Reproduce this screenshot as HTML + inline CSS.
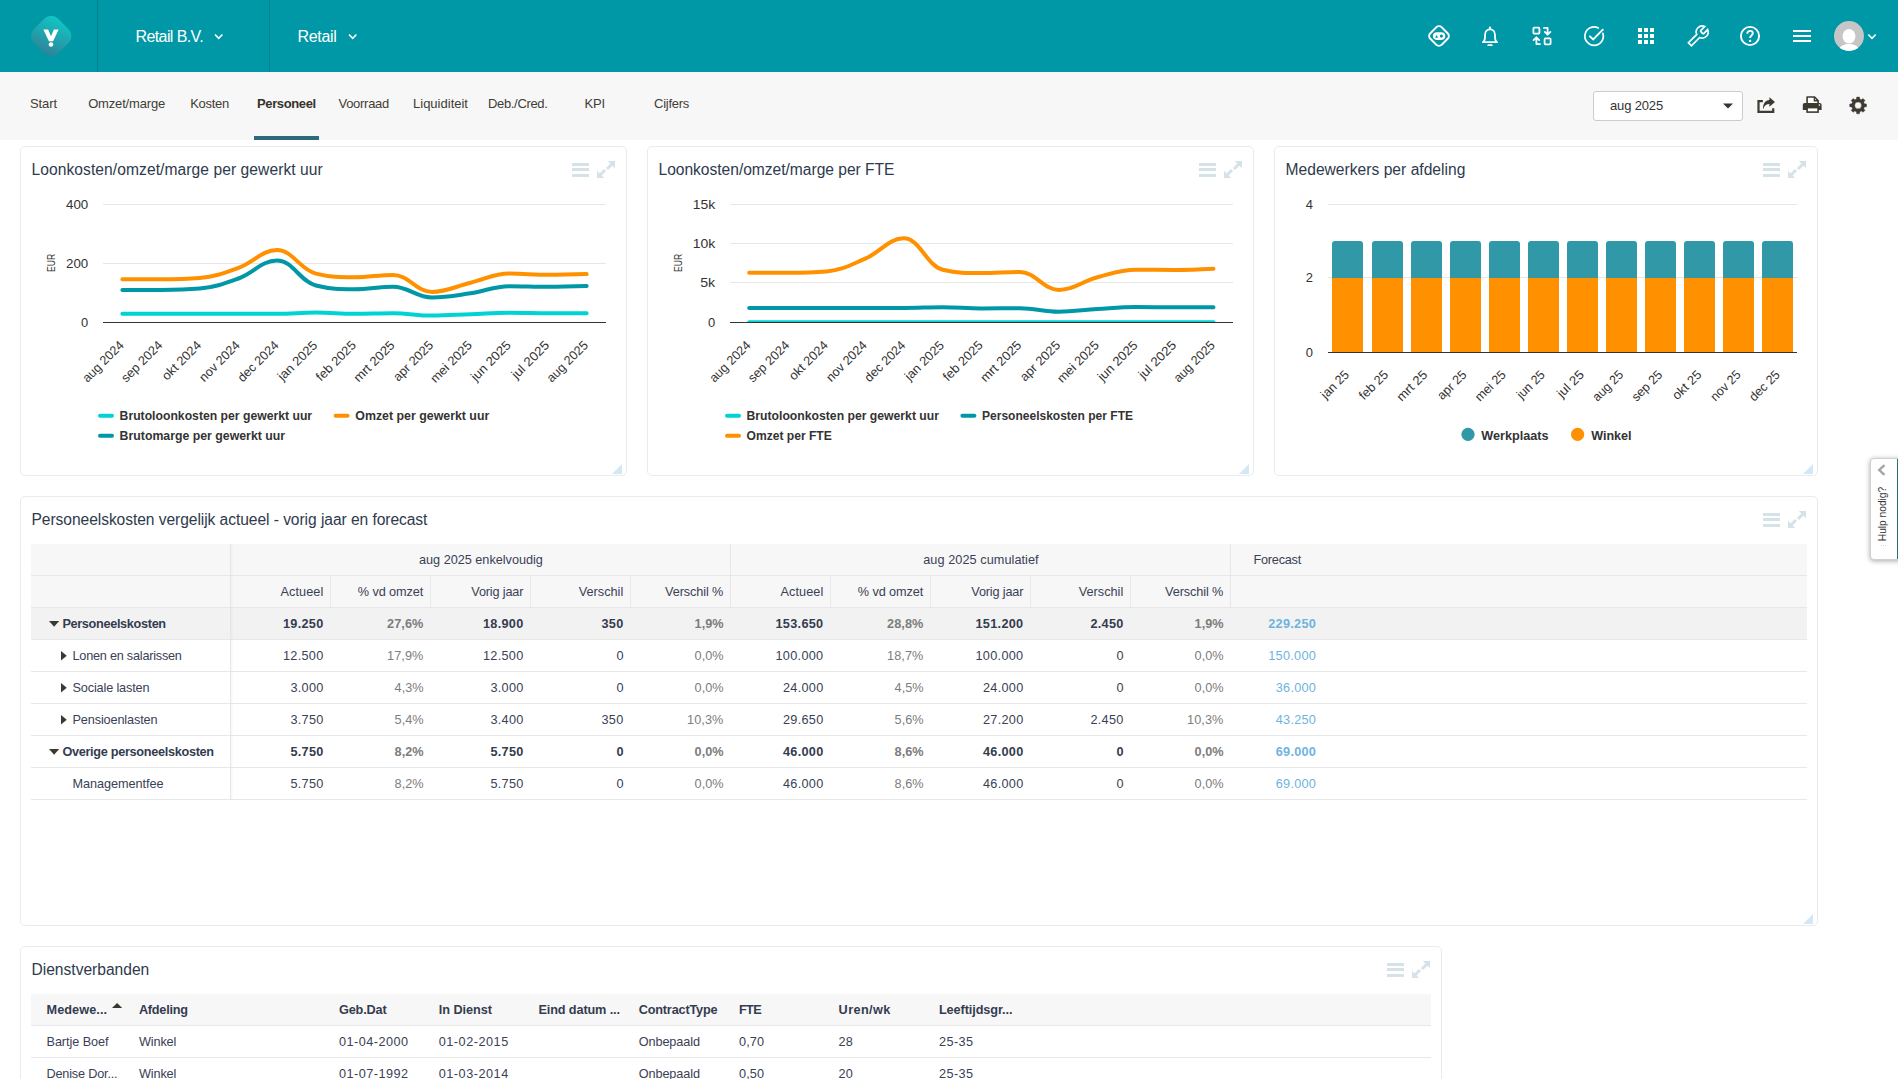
<!DOCTYPE html>
<html lang="nl"><head><meta charset="utf-8"><title>Personeel</title>
<style>

*{box-sizing:border-box;margin:0;padding:0}
html,body{width:1898px;height:1079px;overflow:hidden;background:#fff;font-family:"Liberation Sans",sans-serif;color:#333;font-size:13px}
.abs{position:absolute}
.t{position:absolute;white-space:nowrap;line-height:1}
#hdr{position:absolute;left:0;top:0;width:1898px;height:72px;background:#0097a7}
#sub{position:absolute;left:0;top:72px;width:1898px;height:68px;background:#f7f7f7}
.sep{position:absolute;top:0;width:1px;height:72px;background:#05808f}
.card{position:absolute;background:#fff;border:1px solid #ebebeb;border-radius:5px}
svg{position:absolute;overflow:visible}
svg text{font-family:"Liberation Sans",sans-serif}

</style></head>
<body>
<div id="hdr">
<div class="sep" style="left:97px"></div><div class="sep" style="left:269px"></div>
<svg style="left:29px;top:14px" width="44" height="44" viewBox="0 0 44 44">
<defs><linearGradient id="lg" x1="0.3" y1="0" x2="0.7" y2="1"><stop offset="0" stop-color="#12c4c4"/><stop offset="1" stop-color="#2d8599"/></linearGradient></defs>
<rect x="4.9" y="4.9" width="34.2" height="34.2" rx="9.5" fill="url(#lg)" transform="rotate(45 22 22.3)"/>
<path d="M14.4 15.6 L19.1 15.6 L22 22.2 L24.9 15.6 L29.6 15.6 L24.1 27.3 L19.9 27.3 Z" fill="#fff"/>
<circle cx="22" cy="30.5" r="2.3" fill="#fff"/>
</svg>
<div class="t" style="top:29.26px;font-size:16px;color:#fff;letter-spacing:-0.602px;left:135.50px;">Retail B.V.</div>
<div class="t" style="top:29.26px;font-size:16px;color:#fff;letter-spacing:-0.318px;left:297.50px;">Retail</div>
<svg style="left:0;top:0" width="1" height="1"><path d="M215.00 34.50 L218.70 38.30 L222.40 34.50" fill="none" stroke="#fff" stroke-width="1.6"/></svg>
<svg style="left:0;top:0" width="1" height="1"><path d="M349.00 34.50 L352.70 38.30 L356.40 34.50" fill="none" stroke="#fff" stroke-width="1.6"/></svg>
<svg style="left:0;top:0" width="1" height="1"><path d="M1868.30 34.50 L1872.00 38.30 L1875.70 34.50" fill="none" stroke="#fff" stroke-width="1.6"/></svg>
<svg style="left:1427.0px;top:24.0px" width="24" height="24" viewBox="0 0 24 24" fill="none" stroke="#fff" stroke-width="1.8" stroke-linecap="round" stroke-linejoin="round"><rect x="3.9" y="3.9" width="16.2" height="16.2" rx="4" transform="rotate(45 12 12)" stroke-width="2"/><rect x="5.9" y="8.3" width="12.4" height="7.6" rx="3.8" fill="#fff" stroke="none"/><path d="M8.1 13.7 L9.6 11 L11.1 13.7 Z" fill="#0097a7" stroke="none"/><circle cx="14.4" cy="12.1" r="1.6" fill="#0097a7" stroke="none"/></svg>
<svg style="left:1478.0px;top:24.0px" width="24" height="24" viewBox="0 0 24 24" fill="none" stroke="#fff" stroke-width="1.8" stroke-linecap="round" stroke-linejoin="round"><path d="M4.9 18.2 C6.7 17 7 15.4 7 13 L7 11.2 C7 7.7 9.2 5.3 12 5.3 C14.8 5.3 17 7.7 17 11.2 L17 13 C17 15.4 17.3 17 19.1 18.2 Z" stroke-width="1.8"/><path d="M12 5 L12 3.5" stroke-width="2.2"/><path d="M10.2 21.2 L13.8 21.2" stroke-width="1.7"/></svg>
<svg style="left:1530.0px;top:24.0px" width="24" height="24" viewBox="0 0 24 24" fill="none" stroke="#fff" stroke-width="1.8" stroke-linecap="round" stroke-linejoin="round"><rect x="3.4" y="3.6" width="6" height="6" rx="0.8"/><rect x="14.6" y="14.4" width="6" height="6" rx="0.8"/><path d="M14 3.9 L17.6 3.9 L17.6 10 M14.8 7.9 L17.6 10.7 L20.4 7.9"/><path d="M10 20.1 L6.4 20.1 L6.4 14 M3.6 16.1 L6.4 13.3 L9.2 16.1"/></svg>
<svg style="left:1582.0px;top:24.0px" width="24" height="24" viewBox="0 0 24 24" fill="none" stroke="#fff" stroke-width="1.8" stroke-linecap="round" stroke-linejoin="round"><path d="M20.9 9.4 A9.2 9.2 0 1 1 16.3 3.9" stroke-width="1.7"/><path d="M7.4 11.9 L11.2 15.4 L21.3 5.2" stroke-width="1.9" stroke-linecap="butt" stroke-linejoin="miter"/></svg>
<svg style="left:1634.0px;top:24.0px" width="24" height="24" viewBox="0 0 24 24" fill="none" stroke="#fff" stroke-width="1.8" stroke-linecap="round" stroke-linejoin="round"><rect x="4" y="4" width="4" height="4" fill="#fff" stroke="none"/><rect x="10" y="4" width="4" height="4" fill="#fff" stroke="none"/><rect x="16" y="4" width="4" height="4" fill="#fff" stroke="none"/><rect x="4" y="10" width="4" height="4" fill="#fff" stroke="none"/><rect x="10" y="10" width="4" height="4" fill="#fff" stroke="none"/><rect x="16" y="10" width="4" height="4" fill="#fff" stroke="none"/><rect x="4" y="16" width="4" height="4" fill="#fff" stroke="none"/><rect x="10" y="16" width="4" height="4" fill="#fff" stroke="none"/><rect x="16" y="16" width="4" height="4" fill="#fff" stroke="none"/></svg>
<svg style="left:1686.0px;top:24.0px" width="24" height="24" viewBox="0 0 24 24" fill="none" stroke="#fff" stroke-width="1.8" stroke-linecap="round" stroke-linejoin="round"><path d="M14.7 6.3a1 1 0 0 0 0 1.4l1.6 1.6a1 1 0 0 0 1.4 0l3.77-3.77a6 6 0 0 1-7.94 7.94l-8.3 8.3l-3-3l8.3-8.3a6 6 0 0 1 7.94-7.94l-3.76 3.76z" stroke-width="1.7" stroke-linejoin="miter" transform="translate(0.2 0)"/></svg>
<svg style="left:1738.0px;top:24.0px" width="24" height="24" viewBox="0 0 24 24" fill="none" stroke="#fff" stroke-width="1.8" stroke-linecap="round" stroke-linejoin="round"><circle cx="12" cy="12" r="9.1" stroke-width="1.9"/><path d="M9.3 9.7 C9.3 7.9 10.5 6.9 12.1 6.9 C13.7 6.9 14.8 7.9 14.8 9.3 C14.8 11.3 12.1 11.5 12.1 13.9" stroke-width="1.9" stroke-linecap="butt"/><circle cx="12.1" cy="16.9" r="1.2" fill="#fff" stroke="none"/></svg>
<div class="abs" style="left:1793px;top:30px;width:18px;height:2px;background:#fff"></div><div class="abs" style="left:1793px;top:35px;width:18px;height:2px;background:#fff"></div><div class="abs" style="left:1793px;top:40px;width:18px;height:2px;background:#fff"></div>
<svg style="left:1834px;top:21px" width="30" height="30" viewBox="0 0 30 30"><defs><clipPath id="av"><circle cx="15" cy="15" r="15"/></clipPath></defs>
<circle cx="15" cy="15" r="15" fill="#c6c6c6"/><g clip-path="url(#av)" fill="#fff"><ellipse cx="15" cy="15.3" rx="6.4" ry="7.3"/><path d="M4.5 31 C4.5 25.5 9 23 15 23 C21 23 25.5 25.5 25.5 31 Z"/></g></svg>
</div>
<div id="sub"></div>
<div class="t" style="top:97.40px;font-size:13px;color:#3f3d36;letter-spacing:-0.091px;left:30.00px;">Start</div>
<div class="t" style="top:97.40px;font-size:13px;color:#3f3d36;letter-spacing:-0.177px;left:88.20px;">Omzet/marge</div>
<div class="t" style="top:97.40px;font-size:13px;color:#3f3d36;letter-spacing:-0.279px;left:190.20px;">Kosten</div>
<div class="t" style="top:97.40px;font-size:13px;font-weight:bold;color:#35332b;letter-spacing:-0.372px;left:257.00px;">Personeel</div>
<div class="t" style="top:97.40px;font-size:13px;color:#3f3d36;letter-spacing:-0.283px;left:338.50px;">Voorraad</div>
<div class="t" style="top:97.40px;font-size:13px;color:#3f3d36;letter-spacing:0.006px;left:413.00px;">Liquiditeit</div>
<div class="t" style="top:97.40px;font-size:13px;color:#3f3d36;letter-spacing:-0.336px;left:488.00px;">Deb./Cred.</div>
<div class="t" style="top:97.40px;font-size:13px;color:#3f3d36;letter-spacing:-0.152px;left:584.50px;">KPI</div>
<div class="t" style="top:97.40px;font-size:13px;color:#3f3d36;letter-spacing:-0.263px;left:654.00px;">Cijfers</div>
<div class="abs" style="left:254px;top:136px;width:65px;height:4px;background:#2b6b7d"></div>
<div class="abs" style="left:1593px;top:91px;width:150px;height:30px;background:#fff;border:1px solid #ccc;border-radius:3px"></div>
<div class="t" style="top:99.00px;font-size:13px;color:#333;letter-spacing:-0.153px;left:1610.00px;">aug 2025</div>
<svg style="left:0;top:0" width="1" height="1"><path d="M1723 103.5 L1733 103.5 L1728 108.5 Z" fill="#333"/></svg>
<svg style="left:0;top:0" width="1" height="1">
<path d="M1762.9 101.2 L1758.5 101.2 L1758.5 111.8 L1773.2 111.8 L1773.2 108.2" fill="none" stroke="#3d3a30" stroke-width="2.2"/>
<path d="M1769.4 97.2 L1775 101.9 L1769.4 106.7 L1769.4 104 C1766.3 104 1764.3 105.8 1763 109.4 C1762.8 103.6 1765.4 99.9 1769.4 99.9 Z" fill="#3d3a30"/>
</svg>
<svg style="left:0;top:0" width="1" height="1">
<path d="M1807.1 104 L1807.1 97 L1814.6 97 L1818.1 100.5 L1818.1 104 Z" fill="#fff" stroke="#3d3a30" stroke-width="1.6" stroke-linejoin="round"/>
<path d="M1814.4 97.2 L1814.4 100.7 L1818 100.7" fill="none" stroke="#3d3a30" stroke-width="1.4"/>
<path d="M1802.8 110 L1802.8 104.8 Q1802.8 102.9 1804.7 102.9 L1819.7 102.9 Q1821.6 102.9 1821.6 104.8 L1821.6 110 Z" fill="#3d3a30"/>
<rect x="1807.1" y="107.6" width="11" height="4.5" fill="#fff" stroke="#3d3a30" stroke-width="1.6"/>
<circle cx="1819.4" cy="105.1" r="0.8" fill="#fff"/>
</svg>
<svg style="left:0;top:0" width="1" height="1"><path d="M1864.39 103.77 L1866.48 104.00 L1866.48 106.80 L1864.39 107.03 L1863.70 108.70 L1865.02 110.34 L1863.04 112.32 L1861.40 111.00 L1859.73 111.69 L1859.50 113.78 L1856.70 113.78 L1856.47 111.69 L1854.80 111.00 L1853.16 112.32 L1851.18 110.34 L1852.50 108.70 L1851.81 107.03 L1849.72 106.80 L1849.72 104.00 L1851.81 103.77 L1852.50 102.10 L1851.18 100.46 L1853.16 98.48 L1854.80 99.80 L1856.47 99.11 L1856.70 97.02 L1859.50 97.02 L1859.73 99.11 L1861.40 99.80 L1863.04 98.48 L1865.02 100.46 L1863.70 102.10 Z M1861.50 105.40 A3.4 3.4 0 1 0 1854.70 105.40 A3.4 3.4 0 1 0 1861.50 105.40 Z" fill="#3d3a30" fill-rule="evenodd" stroke="#3d3a30" stroke-width="0.4" stroke-linejoin="round"/></svg>
<div class="card" style="left:20px;top:146px;width:607px;height:330px"><div class="abs" style="left:-21px;top:-147px;width:0;height:0"><div class="t" style="top:161.99px;font-size:15.6px;color:#2e3a4d;letter-spacing:0.072px;left:31.50px;">Loonkosten/omzet/marge per gewerkt uur</div><div class="abs" style="left:571.5px;top:163px;width:17.5px;height:3px;background:#d5e2e7"></div><div class="abs" style="left:571.5px;top:168px;width:17.5px;height:3px;background:#d5e2e7"></div><div class="abs" style="left:571.5px;top:174px;width:17.5px;height:3px;background:#d5e2e7"></div><svg style="left:597px;top:161px" width="18" height="17" viewBox="0 0 18 17"><g fill="#d5e2e7" stroke="#d5e2e7" stroke-width="0"><path d="M10.8 0 L18 0 L18 7.2 Z"/><path d="M0 17 L0 9.8 L7.2 17 Z"/><path d="M15 3 L10 8 M3 14 L8 9" stroke-width="2.9" fill="none"/></g></svg><svg style="left:612px;top:464px" width="10" height="10"><path d="M10 0 L10 10 L0 10 Z" fill="#d3e7f5"/></svg>
<svg style="left:0;top:0" width="1898" height="1079" viewBox="0 0 1898 1079"><path d="M103 204.5 L606 204.5" stroke="#e6e6e6" stroke-width="1"/><path d="M103 263.5 L606 263.5" stroke="#e6e6e6" stroke-width="1"/><path d="M122.35 313.80 C122.35 313.80 145.56 313.80 161.04 313.80 C176.52 313.80 184.25 313.80 199.73 313.80 C215.21 313.80 222.94 313.80 238.42 313.80 C253.90 313.80 261.63 313.80 277.11 313.80 C292.59 313.80 300.32 312.60 315.80 312.60 C331.28 312.60 339.01 313.70 354.49 313.70 C369.97 313.70 377.70 313.20 393.18 313.20 C408.66 313.20 416.39 315.60 431.87 315.60 C447.35 315.60 455.08 314.78 470.56 314.20 C486.04 313.62 493.77 312.70 509.25 312.70 C524.73 312.70 532.46 313.10 547.94 313.20 C563.42 313.30 586.63 313.30 586.63 313.30" stroke="#00d3d3" stroke-width="4" stroke-linecap="round" stroke-linejoin="round" fill="none"/><path d="M122.35 279.30 C122.35 279.30 145.56 279.30 161.04 279.30 C176.52 279.30 184.25 279.30 199.73 277.90 C215.21 276.50 222.94 273.46 238.42 267.90 C253.90 262.34 261.63 250.10 277.11 250.10 C292.59 250.10 300.32 269.90 315.80 273.60 C331.28 277.30 339.01 277.30 354.49 277.30 C369.97 277.30 377.70 274.90 393.18 274.90 C408.66 274.90 416.39 291.90 431.87 291.90 C447.35 291.90 455.08 286.36 470.56 282.70 C486.04 279.04 493.77 273.60 509.25 273.60 C524.73 273.60 532.46 274.80 547.94 274.80 C563.42 274.80 586.63 274.10 586.63 274.10" stroke="#ff9100" stroke-width="4" stroke-linecap="round" stroke-linejoin="round" fill="none"/><path d="M122.35 289.90 C122.35 289.90 145.56 289.90 161.04 289.90 C176.52 289.90 184.25 289.90 199.73 288.50 C215.21 287.10 222.94 284.12 238.42 278.50 C253.90 272.88 261.63 260.40 277.11 260.40 C292.59 260.40 300.32 281.80 315.80 285.50 C331.28 289.20 339.01 289.20 354.49 289.20 C369.97 289.20 377.70 286.80 393.18 286.80 C408.66 286.80 416.39 297.50 431.87 297.50 C447.35 297.50 455.08 295.56 470.56 293.30 C486.04 291.04 493.77 286.20 509.25 286.20 C524.73 286.20 532.46 286.80 547.94 286.80 C563.42 286.80 586.63 286.00 586.63 286.00" stroke="#0097a7" stroke-width="4" stroke-linecap="round" stroke-linejoin="round" fill="none"/><path d="M103 322.5 L606 322.5" stroke="#333" stroke-width="1"/><text x="88.2" y="209.1" text-anchor="end" font-size="12.7" fill="#333" textLength="22.2" lengthAdjust="spacingAndGlyphs">400</text><text x="88.2" y="268.1" text-anchor="end" font-size="12.7" fill="#333" textLength="22.2" lengthAdjust="spacingAndGlyphs">200</text><text x="88.2" y="327.1" text-anchor="end" font-size="12.7" fill="#333" textLength="7.2" lengthAdjust="spacingAndGlyphs">0</text><text transform="translate(55.1 262.9) rotate(-90)" text-anchor="middle" font-size="10" fill="#333" textLength="18.2" lengthAdjust="spacingAndGlyphs">EUR</text><text transform="translate(124.6 346) rotate(-45)" text-anchor="end" font-size="12.7" fill="#333" textLength="52.5" lengthAdjust="spacingAndGlyphs">aug 2024</text><text transform="translate(163.3 346) rotate(-45)" text-anchor="end" font-size="12.7" fill="#333" textLength="52.5" lengthAdjust="spacingAndGlyphs">sep 2024</text><text transform="translate(202.0 346) rotate(-45)" text-anchor="end" font-size="12.7" fill="#333" textLength="49.5" lengthAdjust="spacingAndGlyphs">okt 2024</text><text transform="translate(240.7 346) rotate(-45)" text-anchor="end" font-size="12.7" fill="#333" textLength="51.5" lengthAdjust="spacingAndGlyphs">nov 2024</text><text transform="translate(279.4 346) rotate(-45)" text-anchor="end" font-size="12.7" fill="#333" textLength="52" lengthAdjust="spacingAndGlyphs">dec 2024</text><text transform="translate(318.1 346) rotate(-45)" text-anchor="end" font-size="12.7" fill="#333" textLength="50" lengthAdjust="spacingAndGlyphs">jan 2025</text><text transform="translate(356.8 346) rotate(-45)" text-anchor="end" font-size="12.7" fill="#333" textLength="50.5" lengthAdjust="spacingAndGlyphs">feb 2025</text><text transform="translate(395.5 346) rotate(-45)" text-anchor="end" font-size="12.7" fill="#333" textLength="52" lengthAdjust="spacingAndGlyphs">mrt 2025</text><text transform="translate(434.2 346) rotate(-45)" text-anchor="end" font-size="12.7" fill="#333" textLength="51" lengthAdjust="spacingAndGlyphs">apr 2025</text><text transform="translate(472.9 346) rotate(-45)" text-anchor="end" font-size="12.7" fill="#333" textLength="53" lengthAdjust="spacingAndGlyphs">mei 2025</text><text transform="translate(511.6 346) rotate(-45)" text-anchor="end" font-size="12.7" fill="#333" textLength="50.5" lengthAdjust="spacingAndGlyphs">jun 2025</text><text transform="translate(550.2 346) rotate(-45)" text-anchor="end" font-size="12.7" fill="#333" textLength="47.5" lengthAdjust="spacingAndGlyphs">jul 2025</text><text transform="translate(588.9 346) rotate(-45)" text-anchor="end" font-size="12.7" fill="#333" textLength="52.5" lengthAdjust="spacingAndGlyphs">aug 2025</text><path d="M100 415.8 L112 415.8" stroke="#00d3d3" stroke-width="4" stroke-linecap="round" fill="none"/><text x="119.6" y="420.4" font-size="12.7" font-weight="bold" fill="#333" textLength="192.5" lengthAdjust="spacingAndGlyphs">Brutoloonkosten per gewerkt uur</text><path d="M335.6 415.8 L347.6 415.8" stroke="#ff9100" stroke-width="4" stroke-linecap="round" fill="none"/><text x="355.3" y="420.4" font-size="12.7" font-weight="bold" fill="#333" textLength="134" lengthAdjust="spacingAndGlyphs">Omzet per gewerkt uur</text><path d="M100 435.8 L112 435.8" stroke="#0097a7" stroke-width="4" stroke-linecap="round" fill="none"/><text x="119.6" y="440.4" font-size="12.7" font-weight="bold" fill="#333" textLength="165.5" lengthAdjust="spacingAndGlyphs">Brutomarge per gewerkt uur</text></svg>
</div></div>
<div class="card" style="left:647px;top:146px;width:607px;height:330px"><div class="abs" style="left:-648px;top:-147px;width:0;height:0"><div class="t" style="top:161.99px;font-size:15.6px;color:#2e3a4d;letter-spacing:-0.024px;left:658.50px;">Loonkosten/omzet/marge per FTE</div><div class="abs" style="left:1198.5px;top:163px;width:17.5px;height:3px;background:#d5e2e7"></div><div class="abs" style="left:1198.5px;top:168px;width:17.5px;height:3px;background:#d5e2e7"></div><div class="abs" style="left:1198.5px;top:174px;width:17.5px;height:3px;background:#d5e2e7"></div><svg style="left:1224px;top:161px" width="18" height="17" viewBox="0 0 18 17"><g fill="#d5e2e7" stroke="#d5e2e7" stroke-width="0"><path d="M10.8 0 L18 0 L18 7.2 Z"/><path d="M0 17 L0 9.8 L7.2 17 Z"/><path d="M15 3 L10 8 M3 14 L8 9" stroke-width="2.9" fill="none"/></g></svg><svg style="left:1239px;top:464px" width="10" height="10"><path d="M10 0 L10 10 L0 10 Z" fill="#d3e7f5"/></svg>
<svg style="left:0;top:0" width="1898" height="1079" viewBox="0 0 1898 1079"><path d="M730 204.5 L1233 204.5" stroke="#e6e6e6" stroke-width="1"/><path d="M730 243.5 L1233 243.5" stroke="#e6e6e6" stroke-width="1"/><path d="M730 282.5 L1233 282.5" stroke="#e6e6e6" stroke-width="1"/><clipPath id="c2"><rect x="730" y="200" width="503" height="122.5"/></clipPath><path clip-path="url(#c2)" d="M749.20 322.20 C749.20 322.20 772.41 322.20 787.89 322.20 C803.37 322.20 811.10 322.20 826.58 322.20 C842.06 322.20 849.79 322.20 865.27 322.20 C880.75 322.20 888.48 322.20 903.96 322.20 C919.44 322.20 927.17 322.20 942.65 322.20 C958.13 322.20 965.86 322.20 981.34 322.20 C996.82 322.20 1004.55 322.20 1020.03 322.20 C1035.51 322.20 1043.24 322.20 1058.72 322.20 C1074.20 322.20 1081.93 322.20 1097.41 322.20 C1112.89 322.20 1120.62 322.20 1136.10 322.20 C1151.58 322.20 1159.31 322.20 1174.79 322.20 C1190.27 322.20 1213.48 322.20 1213.48 322.20" stroke="#00d3d3" stroke-width="4" stroke-linecap="round" fill="none"/><path d="M749.20 307.90 C749.20 307.90 772.41 307.90 787.89 307.90 C803.37 307.90 811.10 307.90 826.58 307.90 C842.06 307.90 849.79 307.90 865.27 307.90 C880.75 307.90 888.48 307.90 903.96 307.90 C919.44 307.90 927.17 307.30 942.65 307.30 C958.13 307.30 965.86 308.40 981.34 308.40 C996.82 308.40 1004.55 308.20 1020.03 308.20 C1035.51 308.20 1043.24 311.70 1058.72 311.70 C1074.20 311.70 1081.93 309.92 1097.41 309.00 C1112.89 308.08 1120.62 307.10 1136.10 307.10 C1151.58 307.10 1159.31 307.30 1174.79 307.30 C1190.27 307.30 1213.48 307.20 1213.48 307.20" stroke="#0097a7" stroke-width="4" stroke-linecap="round" stroke-linejoin="round" fill="none"/><path d="M749.20 272.70 C749.20 272.70 772.41 272.70 787.89 272.70 C803.37 272.70 811.10 272.70 826.58 271.40 C842.06 270.10 849.79 265.32 865.27 258.70 C880.75 252.08 888.48 238.30 903.96 238.30 C919.44 238.30 927.17 266.30 942.65 269.70 C958.13 273.10 965.86 273.10 981.34 273.10 C996.82 273.10 1004.55 272.00 1020.03 272.00 C1035.51 272.00 1043.24 289.90 1058.72 289.90 C1074.20 289.90 1081.93 281.24 1097.41 277.20 C1112.89 273.16 1120.62 269.70 1136.10 269.70 C1151.58 269.70 1159.31 269.90 1174.79 269.90 C1190.27 269.90 1213.48 268.70 1213.48 268.70" stroke="#ff9100" stroke-width="4" stroke-linecap="round" stroke-linejoin="round" fill="none"/><path d="M730 322.5 L1233 322.5" stroke="#333" stroke-width="1"/><text x="715.2" y="209.1" text-anchor="end" font-size="12.7" fill="#333" textLength="22.5" lengthAdjust="spacingAndGlyphs">15k</text><text x="715.2" y="248.1" text-anchor="end" font-size="12.7" fill="#333" textLength="22.5" lengthAdjust="spacingAndGlyphs">10k</text><text x="715.2" y="287.1" text-anchor="end" font-size="12.7" fill="#333" textLength="15" lengthAdjust="spacingAndGlyphs">5k</text><text x="715.2" y="327.1" text-anchor="end" font-size="12.7" fill="#333" textLength="7.2" lengthAdjust="spacingAndGlyphs">0</text><text transform="translate(682.1 262.9) rotate(-90)" text-anchor="middle" font-size="10" fill="#333" textLength="18.2" lengthAdjust="spacingAndGlyphs">EUR</text><text transform="translate(751.5 346) rotate(-45)" text-anchor="end" font-size="12.7" fill="#333" textLength="52.5" lengthAdjust="spacingAndGlyphs">aug 2024</text><text transform="translate(790.2 346) rotate(-45)" text-anchor="end" font-size="12.7" fill="#333" textLength="52.5" lengthAdjust="spacingAndGlyphs">sep 2024</text><text transform="translate(828.9 346) rotate(-45)" text-anchor="end" font-size="12.7" fill="#333" textLength="49.5" lengthAdjust="spacingAndGlyphs">okt 2024</text><text transform="translate(867.6 346) rotate(-45)" text-anchor="end" font-size="12.7" fill="#333" textLength="51.5" lengthAdjust="spacingAndGlyphs">nov 2024</text><text transform="translate(906.3 346) rotate(-45)" text-anchor="end" font-size="12.7" fill="#333" textLength="52" lengthAdjust="spacingAndGlyphs">dec 2024</text><text transform="translate(945.0 346) rotate(-45)" text-anchor="end" font-size="12.7" fill="#333" textLength="50" lengthAdjust="spacingAndGlyphs">jan 2025</text><text transform="translate(983.6 346) rotate(-45)" text-anchor="end" font-size="12.7" fill="#333" textLength="50.5" lengthAdjust="spacingAndGlyphs">feb 2025</text><text transform="translate(1022.3 346) rotate(-45)" text-anchor="end" font-size="12.7" fill="#333" textLength="52" lengthAdjust="spacingAndGlyphs">mrt 2025</text><text transform="translate(1061.0 346) rotate(-45)" text-anchor="end" font-size="12.7" fill="#333" textLength="51" lengthAdjust="spacingAndGlyphs">apr 2025</text><text transform="translate(1099.7 346) rotate(-45)" text-anchor="end" font-size="12.7" fill="#333" textLength="53" lengthAdjust="spacingAndGlyphs">mei 2025</text><text transform="translate(1138.4 346) rotate(-45)" text-anchor="end" font-size="12.7" fill="#333" textLength="50.5" lengthAdjust="spacingAndGlyphs">jun 2025</text><text transform="translate(1177.1 346) rotate(-45)" text-anchor="end" font-size="12.7" fill="#333" textLength="47.5" lengthAdjust="spacingAndGlyphs">jul 2025</text><text transform="translate(1215.8 346) rotate(-45)" text-anchor="end" font-size="12.7" fill="#333" textLength="52.5" lengthAdjust="spacingAndGlyphs">aug 2025</text><path d="M727 415.8 L739 415.8" stroke="#00d3d3" stroke-width="4" stroke-linecap="round" fill="none"/><text x="746.5" y="420.4" font-size="12.7" font-weight="bold" fill="#333" textLength="192.5" lengthAdjust="spacingAndGlyphs">Brutoloonkosten per gewerkt uur</text><path d="M962.4 415.8 L974.4 415.8" stroke="#0097a7" stroke-width="4" stroke-linecap="round" fill="none"/><text x="982" y="420.4" font-size="12.7" font-weight="bold" fill="#333" textLength="151" lengthAdjust="spacingAndGlyphs">Personeelskosten per FTE</text><path d="M727 435.8 L739 435.8" stroke="#ff9100" stroke-width="4" stroke-linecap="round" fill="none"/><text x="746.5" y="440.4" font-size="12.7" font-weight="bold" fill="#333" textLength="85.3" lengthAdjust="spacingAndGlyphs">Omzet per FTE</text></svg>
</div></div>
<div class="card" style="left:1274px;top:146px;width:544px;height:330px"><div class="abs" style="left:-1275px;top:-147px;width:0;height:0"><div class="t" style="top:161.99px;font-size:15.6px;color:#2e3a4d;letter-spacing:0.021px;left:1285.50px;">Medewerkers per afdeling</div><div class="abs" style="left:1762.5px;top:163px;width:17.5px;height:3px;background:#d5e2e7"></div><div class="abs" style="left:1762.5px;top:168px;width:17.5px;height:3px;background:#d5e2e7"></div><div class="abs" style="left:1762.5px;top:174px;width:17.5px;height:3px;background:#d5e2e7"></div><svg style="left:1788px;top:161px" width="18" height="17" viewBox="0 0 18 17"><g fill="#d5e2e7" stroke="#d5e2e7" stroke-width="0"><path d="M10.8 0 L18 0 L18 7.2 Z"/><path d="M0 17 L0 9.8 L7.2 17 Z"/><path d="M15 3 L10 8 M3 14 L8 9" stroke-width="2.9" fill="none"/></g></svg><svg style="left:1803px;top:464px" width="10" height="10"><path d="M10 0 L10 10 L0 10 Z" fill="#d3e7f5"/></svg>
<svg style="left:0;top:0" width="1898" height="1079" viewBox="0 0 1898 1079"><path d="M1328 204.5 L1797 204.5" stroke="#e6e6e6" stroke-width="1"/><path d="M1328 277.5 L1797 277.5" stroke="#e6e6e6" stroke-width="1"/><path d="M1332 278 L1332 244 Q1332 241 1335 241 L1360 241 Q1363 241 1363 244 L1363 278 Z" fill="#3098a6"/><rect x="1332" y="278" width="31" height="74" fill="#ff9100"/><path d="M1372 278 L1372 244 Q1372 241 1375 241 L1400 241 Q1403 241 1403 244 L1403 278 Z" fill="#3098a6"/><rect x="1372" y="278" width="31" height="74" fill="#ff9100"/><path d="M1411 278 L1411 244 Q1411 241 1414 241 L1439 241 Q1442 241 1442 244 L1442 278 Z" fill="#3098a6"/><rect x="1411" y="278" width="31" height="74" fill="#ff9100"/><path d="M1450 278 L1450 244 Q1450 241 1453 241 L1478 241 Q1481 241 1481 244 L1481 278 Z" fill="#3098a6"/><rect x="1450" y="278" width="31" height="74" fill="#ff9100"/><path d="M1489 278 L1489 244 Q1489 241 1492 241 L1517 241 Q1520 241 1520 244 L1520 278 Z" fill="#3098a6"/><rect x="1489" y="278" width="31" height="74" fill="#ff9100"/><path d="M1528 278 L1528 244 Q1528 241 1531 241 L1556 241 Q1559 241 1559 244 L1559 278 Z" fill="#3098a6"/><rect x="1528" y="278" width="31" height="74" fill="#ff9100"/><path d="M1567 278 L1567 244 Q1567 241 1570 241 L1595 241 Q1598 241 1598 244 L1598 278 Z" fill="#3098a6"/><rect x="1567" y="278" width="31" height="74" fill="#ff9100"/><path d="M1606 278 L1606 244 Q1606 241 1609 241 L1634 241 Q1637 241 1637 244 L1637 278 Z" fill="#3098a6"/><rect x="1606" y="278" width="31" height="74" fill="#ff9100"/><path d="M1645 278 L1645 244 Q1645 241 1648 241 L1673 241 Q1676 241 1676 244 L1676 278 Z" fill="#3098a6"/><rect x="1645" y="278" width="31" height="74" fill="#ff9100"/><path d="M1684 278 L1684 244 Q1684 241 1687 241 L1712 241 Q1715 241 1715 244 L1715 278 Z" fill="#3098a6"/><rect x="1684" y="278" width="31" height="74" fill="#ff9100"/><path d="M1723 278 L1723 244 Q1723 241 1726 241 L1751 241 Q1754 241 1754 244 L1754 278 Z" fill="#3098a6"/><rect x="1723" y="278" width="31" height="74" fill="#ff9100"/><path d="M1762 278 L1762 244 Q1762 241 1765 241 L1790 241 Q1793 241 1793 244 L1793 278 Z" fill="#3098a6"/><rect x="1762" y="278" width="31" height="74" fill="#ff9100"/><path d="M1328 352.5 L1797 352.5" stroke="#333" stroke-width="1"/><text x="1313" y="209.1" text-anchor="end" font-size="12.7" fill="#333" textLength="7.2" lengthAdjust="spacingAndGlyphs">4</text><text x="1313" y="282.1" text-anchor="end" font-size="12.7" fill="#333" textLength="7.2" lengthAdjust="spacingAndGlyphs">2</text><text x="1313" y="356.6" text-anchor="end" font-size="12.7" fill="#333" textLength="7.2" lengthAdjust="spacingAndGlyphs">0</text><text transform="translate(1349.9 375.5) rotate(-45)" text-anchor="end" font-size="12.7" fill="#333" textLength="34" lengthAdjust="spacingAndGlyphs">jan 25</text><text transform="translate(1389.1 375.5) rotate(-45)" text-anchor="end" font-size="12.7" fill="#333" textLength="35.5" lengthAdjust="spacingAndGlyphs">feb 25</text><text transform="translate(1428.2 375.5) rotate(-45)" text-anchor="end" font-size="12.7" fill="#333" textLength="37.5" lengthAdjust="spacingAndGlyphs">mrt 25</text><text transform="translate(1467.4 375.5) rotate(-45)" text-anchor="end" font-size="12.7" fill="#333" textLength="35.5" lengthAdjust="spacingAndGlyphs">apr 25</text><text transform="translate(1506.6 375.5) rotate(-45)" text-anchor="end" font-size="12.7" fill="#333" textLength="37.5" lengthAdjust="spacingAndGlyphs">mei 25</text><text transform="translate(1545.7 375.5) rotate(-45)" text-anchor="end" font-size="12.7" fill="#333" textLength="34" lengthAdjust="spacingAndGlyphs">jun 25</text><text transform="translate(1584.9 375.5) rotate(-45)" text-anchor="end" font-size="12.7" fill="#333" textLength="32.5" lengthAdjust="spacingAndGlyphs">jul 25</text><text transform="translate(1624.1 375.5) rotate(-45)" text-anchor="end" font-size="12.7" fill="#333" textLength="37.5" lengthAdjust="spacingAndGlyphs">aug 25</text><text transform="translate(1663.2 375.5) rotate(-45)" text-anchor="end" font-size="12.7" fill="#333" textLength="37.5" lengthAdjust="spacingAndGlyphs">sep 25</text><text transform="translate(1702.4 375.5) rotate(-45)" text-anchor="end" font-size="12.7" fill="#333" textLength="35.5" lengthAdjust="spacingAndGlyphs">okt 25</text><text transform="translate(1741.6 375.5) rotate(-45)" text-anchor="end" font-size="12.7" fill="#333" textLength="37" lengthAdjust="spacingAndGlyphs">nov 25</text><text transform="translate(1780.7 375.5) rotate(-45)" text-anchor="end" font-size="12.7" fill="#333" textLength="37.5" lengthAdjust="spacingAndGlyphs">dec 25</text><circle cx="1468" cy="434.4" r="6.6" fill="#3098a6"/><text x="1481.3" y="440.2" font-size="12.7" font-weight="bold" fill="#333" textLength="67.3" lengthAdjust="spacingAndGlyphs">Werkplaats</text><circle cx="1577.6" cy="434.4" r="6.6" fill="#ff9100"/><text x="1591.2" y="440.2" font-size="12.7" font-weight="bold" fill="#333" textLength="40.4" lengthAdjust="spacingAndGlyphs">Winkel</text></svg>
</div></div>
<div class="card" style="left:20px;top:496px;width:1798px;height:430px"><div class="abs" style="left:-21px;top:-497px;width:0;height:0"><div class="t" style="top:511.99px;font-size:15.6px;color:#2e3a4d;letter-spacing:-0.063px;left:31.50px;">Personeelskosten vergelijk actueel - vorig jaar en forecast</div><div class="abs" style="left:1762.5px;top:513px;width:17.5px;height:3px;background:#d5e2e7"></div><div class="abs" style="left:1762.5px;top:518px;width:17.5px;height:3px;background:#d5e2e7"></div><div class="abs" style="left:1762.5px;top:524px;width:17.5px;height:3px;background:#d5e2e7"></div><svg style="left:1788px;top:511px" width="18" height="17" viewBox="0 0 18 17"><g fill="#d5e2e7" stroke="#d5e2e7" stroke-width="0"><path d="M10.8 0 L18 0 L18 7.2 Z"/><path d="M0 17 L0 9.8 L7.2 17 Z"/><path d="M15 3 L10 8 M3 14 L8 9" stroke-width="2.9" fill="none"/></g></svg><svg style="left:1803px;top:914px" width="10" height="10"><path d="M10 0 L10 10 L0 10 Z" fill="#d3e7f5"/></svg>
<div class="abs" style="left:31px;top:544px;width:1776px;height:64px;background:#f7f7f7"></div><div class="abs" style="left:31px;top:608px;width:1776px;height:32px;background:#f2f2f2"></div><div class="abs" style="left:31px;top:575px;width:1776px;height:1px;background:#e8e8e8"></div><div class="abs" style="left:31px;top:607px;width:1776px;height:1px;background:#e8e8e8"></div><div class="abs" style="left:31px;top:639px;width:1776px;height:1px;background:#e8e8e8"></div><div class="abs" style="left:31px;top:671px;width:1776px;height:1px;background:#e8e8e8"></div><div class="abs" style="left:31px;top:703px;width:1776px;height:1px;background:#e8e8e8"></div><div class="abs" style="left:31px;top:735px;width:1776px;height:1px;background:#e8e8e8"></div><div class="abs" style="left:31px;top:767px;width:1776px;height:1px;background:#e8e8e8"></div><div class="abs" style="left:31px;top:799px;width:1776px;height:1px;background:#e8e8e8"></div><div class="abs" style="left:730px;top:544px;width:1px;height:63px;background:#e6e6e6"></div><div class="abs" style="left:1230px;top:544px;width:1px;height:63px;background:#e6e6e6"></div><div class="abs" style="left:330px;top:576px;width:1px;height:31px;background:#e9e9e9"></div><div class="abs" style="left:430px;top:576px;width:1px;height:31px;background:#e9e9e9"></div><div class="abs" style="left:530px;top:576px;width:1px;height:31px;background:#e9e9e9"></div><div class="abs" style="left:630px;top:576px;width:1px;height:31px;background:#e9e9e9"></div><div class="abs" style="left:830px;top:576px;width:1px;height:31px;background:#e9e9e9"></div><div class="abs" style="left:930px;top:576px;width:1px;height:31px;background:#e9e9e9"></div><div class="abs" style="left:1030px;top:576px;width:1px;height:31px;background:#e9e9e9"></div><div class="abs" style="left:1130px;top:576px;width:1px;height:31px;background:#e9e9e9"></div><div class="abs" style="left:230px;top:544px;width:4px;height:256px;background:linear-gradient(90deg,#e6e6e6 0,#e6e6e6 25%,rgba(0,0,0,0.03) 25%,rgba(0,0,0,0) 100%)"></div><div class="t" style="top:553.55px;font-size:12.7px;color:#3a4156;letter-spacing:-0.014px;left:419.00px;">aug 2025 enkelvoudig</div><div class="t" style="top:553.55px;font-size:12.7px;color:#3a4156;letter-spacing:0.060px;left:923.25px;">aug 2025 cumulatief</div><div class="t" style="top:553.55px;font-size:12.7px;color:#3a4156;letter-spacing:-0.213px;left:1253.40px;">Forecast</div><div class="t" style="top:585.85px;font-size:12.7px;color:#3a4156;letter-spacing:0.063px;left:280.50px;">Actueel</div><div class="t" style="top:585.85px;font-size:12.7px;color:#3a4156;letter-spacing:-0.084px;left:357.80px;">% vd omzet</div><div class="t" style="top:585.85px;font-size:12.7px;color:#3a4156;letter-spacing:-0.165px;left:471.30px;">Vorig jaar</div><div class="t" style="top:585.85px;font-size:12.7px;color:#3a4156;letter-spacing:0.004px;left:578.80px;">Verschil</div><div class="t" style="top:585.85px;font-size:12.7px;color:#3a4156;letter-spacing:-0.109px;left:665.10px;">Verschil %</div><div class="t" style="top:585.85px;font-size:12.7px;color:#3a4156;letter-spacing:0.063px;left:780.50px;">Actueel</div><div class="t" style="top:585.85px;font-size:12.7px;color:#3a4156;letter-spacing:-0.084px;left:857.80px;">% vd omzet</div><div class="t" style="top:585.85px;font-size:12.7px;color:#3a4156;letter-spacing:-0.165px;left:971.30px;">Vorig jaar</div><div class="t" style="top:585.85px;font-size:12.7px;color:#3a4156;letter-spacing:0.004px;left:1078.80px;">Verschil</div><div class="t" style="top:585.85px;font-size:12.7px;color:#3a4156;letter-spacing:-0.109px;left:1165.10px;">Verschil %</div><svg style="left:49px;top:620.7px" width="10.2" height="5.8" viewBox="0 0 10.2 5.8"><path d="M0 0 L10.2 0 L5.1 5.8 Z" fill="#3b392f"/></svg><div class="t" style="top:617.95px;font-size:12.7px;font-weight:bold;color:#343c50;letter-spacing:-0.325px;left:62.40px;">Personeelskosten</div><div class="t" style="top:617.95px;font-size:12.7px;font-weight:bold;color:#343c50;letter-spacing:0.268px;left:283.05px;">19.250</div><div class="t" style="top:617.95px;font-size:12.7px;font-weight:bold;color:#7d7d7d;letter-spacing:0.081px;left:387.09px;">27,6%</div><div class="t" style="top:617.95px;font-size:12.7px;font-weight:bold;color:#343c50;letter-spacing:0.268px;left:483.05px;">18.900</div><div class="t" style="top:617.95px;font-size:12.7px;font-weight:bold;color:#343c50;letter-spacing:0.259px;left:601.54px;">350</div><div class="t" style="top:617.95px;font-size:12.7px;font-weight:bold;color:#7d7d7d;letter-spacing:-0.013px;left:694.61px;">1,9%</div><div class="t" style="top:617.95px;font-size:12.7px;font-weight:bold;color:#343c50;letter-spacing:0.295px;left:775.53px;">153.650</div><div class="t" style="top:617.95px;font-size:12.7px;font-weight:bold;color:#7d7d7d;letter-spacing:0.081px;left:887.09px;">28,8%</div><div class="t" style="top:617.95px;font-size:12.7px;font-weight:bold;color:#343c50;letter-spacing:0.295px;left:975.53px;">151.200</div><div class="t" style="top:617.95px;font-size:12.7px;font-weight:bold;color:#343c50;letter-spacing:0.230px;left:1090.57px;">2.450</div><div class="t" style="top:617.95px;font-size:12.7px;font-weight:bold;color:#7d7d7d;letter-spacing:-0.013px;left:1194.61px;">1,9%</div><div class="t" style="top:617.95px;font-size:12.7px;font-weight:bold;color:#6fb3df;letter-spacing:0.295px;left:1268.23px;">229.250</div><svg style="left:61.2px;top:650.9px" width="5.8" height="9.6" viewBox="0 0 5.8 9.6"><path d="M0 0 L5.8 4.8 L0 9.6 Z" fill="#3b392f"/></svg><div class="t" style="top:649.95px;font-size:12.7px;color:#3a4156;letter-spacing:-0.230px;left:72.50px;">Lonen en salarissen</div><div class="t" style="top:649.95px;font-size:12.7px;color:#3a4156;letter-spacing:0.268px;left:283.05px;">12.500</div><div class="t" style="top:649.95px;font-size:12.7px;color:#7d7d7d;letter-spacing:0.081px;left:387.09px;">17,9%</div><div class="t" style="top:649.95px;font-size:12.7px;color:#3a4156;letter-spacing:0.268px;left:483.05px;">12.500</div><div class="t" style="top:649.95px;font-size:12.7px;color:#3a4156;letter-spacing:-0.141px;left:616.58px;">0</div><div class="t" style="top:649.95px;font-size:12.7px;color:#7d7d7d;letter-spacing:-0.013px;left:694.61px;">0,0%</div><div class="t" style="top:649.95px;font-size:12.7px;color:#3a4156;letter-spacing:0.295px;left:775.53px;">100.000</div><div class="t" style="top:649.95px;font-size:12.7px;color:#7d7d7d;letter-spacing:0.081px;left:887.09px;">18,7%</div><div class="t" style="top:649.95px;font-size:12.7px;color:#3a4156;letter-spacing:0.295px;left:975.53px;">100.000</div><div class="t" style="top:649.95px;font-size:12.7px;color:#3a4156;letter-spacing:-0.141px;left:1116.58px;">0</div><div class="t" style="top:649.95px;font-size:12.7px;color:#7d7d7d;letter-spacing:-0.013px;left:1194.61px;">0,0%</div><div class="t" style="top:649.95px;font-size:12.7px;color:#6fb3df;letter-spacing:0.295px;left:1268.23px;">150.000</div><svg style="left:61.2px;top:682.9px" width="5.8" height="9.6" viewBox="0 0 5.8 9.6"><path d="M0 0 L5.8 4.8 L0 9.6 Z" fill="#3b392f"/></svg><div class="t" style="top:681.95px;font-size:12.7px;color:#3a4156;letter-spacing:-0.148px;left:72.50px;">Sociale lasten</div><div class="t" style="top:681.95px;font-size:12.7px;color:#3a4156;letter-spacing:0.230px;left:290.57px;">3.000</div><div class="t" style="top:681.95px;font-size:12.7px;color:#7d7d7d;letter-spacing:-0.013px;left:394.61px;">4,3%</div><div class="t" style="top:681.95px;font-size:12.7px;color:#3a4156;letter-spacing:0.230px;left:490.57px;">3.000</div><div class="t" style="top:681.95px;font-size:12.7px;color:#3a4156;letter-spacing:-0.141px;left:616.58px;">0</div><div class="t" style="top:681.95px;font-size:12.7px;color:#7d7d7d;letter-spacing:-0.013px;left:694.61px;">0,0%</div><div class="t" style="top:681.95px;font-size:12.7px;color:#3a4156;letter-spacing:0.268px;left:783.05px;">24.000</div><div class="t" style="top:681.95px;font-size:12.7px;color:#7d7d7d;letter-spacing:-0.013px;left:894.61px;">4,5%</div><div class="t" style="top:681.95px;font-size:12.7px;color:#3a4156;letter-spacing:0.268px;left:983.05px;">24.000</div><div class="t" style="top:681.95px;font-size:12.7px;color:#3a4156;letter-spacing:-0.141px;left:1116.58px;">0</div><div class="t" style="top:681.95px;font-size:12.7px;color:#7d7d7d;letter-spacing:-0.013px;left:1194.61px;">0,0%</div><div class="t" style="top:681.95px;font-size:12.7px;color:#6fb3df;letter-spacing:0.268px;left:1275.75px;">36.000</div><svg style="left:61.2px;top:714.9px" width="5.8" height="9.6" viewBox="0 0 5.8 9.6"><path d="M0 0 L5.8 4.8 L0 9.6 Z" fill="#3b392f"/></svg><div class="t" style="top:713.95px;font-size:12.7px;color:#3a4156;letter-spacing:-0.132px;left:72.50px;">Pensioenlasten</div><div class="t" style="top:713.95px;font-size:12.7px;color:#3a4156;letter-spacing:0.230px;left:290.57px;">3.750</div><div class="t" style="top:713.95px;font-size:12.7px;color:#7d7d7d;letter-spacing:-0.013px;left:394.61px;">5,4%</div><div class="t" style="top:713.95px;font-size:12.7px;color:#3a4156;letter-spacing:0.230px;left:490.57px;">3.400</div><div class="t" style="top:713.95px;font-size:12.7px;color:#3a4156;letter-spacing:0.259px;left:601.54px;">350</div><div class="t" style="top:713.95px;font-size:12.7px;color:#7d7d7d;letter-spacing:0.081px;left:687.09px;">10,3%</div><div class="t" style="top:713.95px;font-size:12.7px;color:#3a4156;letter-spacing:0.268px;left:783.05px;">29.650</div><div class="t" style="top:713.95px;font-size:12.7px;color:#7d7d7d;letter-spacing:-0.013px;left:894.61px;">5,6%</div><div class="t" style="top:713.95px;font-size:12.7px;color:#3a4156;letter-spacing:0.268px;left:983.05px;">27.200</div><div class="t" style="top:713.95px;font-size:12.7px;color:#3a4156;letter-spacing:0.230px;left:1090.57px;">2.450</div><div class="t" style="top:713.95px;font-size:12.7px;color:#7d7d7d;letter-spacing:0.081px;left:1187.09px;">10,3%</div><div class="t" style="top:713.95px;font-size:12.7px;color:#6fb3df;letter-spacing:0.268px;left:1275.75px;">43.250</div><svg style="left:49px;top:748.7px" width="10.2" height="5.8" viewBox="0 0 10.2 5.8"><path d="M0 0 L10.2 0 L5.1 5.8 Z" fill="#3b392f"/></svg><div class="t" style="top:745.95px;font-size:12.7px;font-weight:bold;color:#343c50;letter-spacing:-0.304px;left:62.40px;">Overige personeelskosten</div><div class="t" style="top:745.95px;font-size:12.7px;font-weight:bold;color:#343c50;letter-spacing:0.230px;left:290.57px;">5.750</div><div class="t" style="top:745.95px;font-size:12.7px;font-weight:bold;color:#7d7d7d;letter-spacing:-0.013px;left:394.61px;">8,2%</div><div class="t" style="top:745.95px;font-size:12.7px;font-weight:bold;color:#343c50;letter-spacing:0.230px;left:490.57px;">5.750</div><div class="t" style="top:745.95px;font-size:12.7px;font-weight:bold;color:#343c50;letter-spacing:-0.141px;left:616.58px;">0</div><div class="t" style="top:745.95px;font-size:12.7px;font-weight:bold;color:#7d7d7d;letter-spacing:-0.013px;left:694.61px;">0,0%</div><div class="t" style="top:745.95px;font-size:12.7px;font-weight:bold;color:#343c50;letter-spacing:0.268px;left:783.05px;">46.000</div><div class="t" style="top:745.95px;font-size:12.7px;font-weight:bold;color:#7d7d7d;letter-spacing:-0.013px;left:894.61px;">8,6%</div><div class="t" style="top:745.95px;font-size:12.7px;font-weight:bold;color:#343c50;letter-spacing:0.268px;left:983.05px;">46.000</div><div class="t" style="top:745.95px;font-size:12.7px;font-weight:bold;color:#343c50;letter-spacing:-0.141px;left:1116.58px;">0</div><div class="t" style="top:745.95px;font-size:12.7px;font-weight:bold;color:#7d7d7d;letter-spacing:-0.013px;left:1194.61px;">0,0%</div><div class="t" style="top:745.95px;font-size:12.7px;font-weight:bold;color:#6fb3df;letter-spacing:0.268px;left:1275.75px;">69.000</div><div class="t" style="top:777.95px;font-size:12.7px;color:#3a4156;letter-spacing:-0.059px;left:72.50px;">Managementfee</div><div class="t" style="top:777.95px;font-size:12.7px;color:#3a4156;letter-spacing:0.230px;left:290.57px;">5.750</div><div class="t" style="top:777.95px;font-size:12.7px;color:#7d7d7d;letter-spacing:-0.013px;left:394.61px;">8,2%</div><div class="t" style="top:777.95px;font-size:12.7px;color:#3a4156;letter-spacing:0.230px;left:490.57px;">5.750</div><div class="t" style="top:777.95px;font-size:12.7px;color:#3a4156;letter-spacing:-0.141px;left:616.58px;">0</div><div class="t" style="top:777.95px;font-size:12.7px;color:#7d7d7d;letter-spacing:-0.013px;left:694.61px;">0,0%</div><div class="t" style="top:777.95px;font-size:12.7px;color:#3a4156;letter-spacing:0.268px;left:783.05px;">46.000</div><div class="t" style="top:777.95px;font-size:12.7px;color:#7d7d7d;letter-spacing:-0.013px;left:894.61px;">8,6%</div><div class="t" style="top:777.95px;font-size:12.7px;color:#3a4156;letter-spacing:0.268px;left:983.05px;">46.000</div><div class="t" style="top:777.95px;font-size:12.7px;color:#3a4156;letter-spacing:-0.141px;left:1116.58px;">0</div><div class="t" style="top:777.95px;font-size:12.7px;color:#7d7d7d;letter-spacing:-0.013px;left:1194.61px;">0,0%</div><div class="t" style="top:777.95px;font-size:12.7px;color:#6fb3df;letter-spacing:0.268px;left:1275.75px;">69.000</div>
</div></div>
<div class="card" style="left:20px;top:946px;width:1422px;height:200px"><div class="abs" style="left:-21px;top:-947px;width:0;height:0"><div class="t" style="top:961.99px;font-size:15.6px;color:#2e3a4d;letter-spacing:-0.010px;left:31.50px;">Dienstverbanden</div><div class="abs" style="left:1386.5px;top:963px;width:17.5px;height:3px;background:#d5e2e7"></div><div class="abs" style="left:1386.5px;top:968px;width:17.5px;height:3px;background:#d5e2e7"></div><div class="abs" style="left:1386.5px;top:974px;width:17.5px;height:3px;background:#d5e2e7"></div><svg style="left:1412px;top:961px" width="18" height="17" viewBox="0 0 18 17"><g fill="#d5e2e7" stroke="#d5e2e7" stroke-width="0"><path d="M10.8 0 L18 0 L18 7.2 Z"/><path d="M0 17 L0 9.8 L7.2 17 Z"/><path d="M15 3 L10 8 M3 14 L8 9" stroke-width="2.9" fill="none"/></g></svg><svg style="left:1427px;top:1134px" width="10" height="10"><path d="M10 0 L10 10 L0 10 Z" fill="#d3e7f5"/></svg>
<div class="abs" style="left:31px;top:994px;width:1400px;height:32px;background:#f7f7f7"></div><div class="abs" style="left:31px;top:1025px;width:1400px;height:1px;background:#e8e8e8"></div><div class="abs" style="left:31px;top:1057px;width:1400px;height:1px;background:#e8e8e8"></div><div class="t" style="top:1003.75px;font-size:12.7px;font-weight:bold;color:#343c50;letter-spacing:0.080px;left:46.50px;">Medewe...</div><div class="t" style="top:1003.75px;font-size:12.7px;font-weight:bold;color:#343c50;letter-spacing:-0.236px;left:138.90px;">Afdeling</div><div class="t" style="top:1003.75px;font-size:12.7px;font-weight:bold;color:#343c50;letter-spacing:-0.170px;left:339.00px;">Geb.Dat</div><div class="t" style="top:1003.75px;font-size:12.7px;font-weight:bold;color:#343c50;letter-spacing:-0.036px;left:438.70px;">In Dienst</div><div class="t" style="top:1003.75px;font-size:12.7px;font-weight:bold;color:#343c50;letter-spacing:-0.118px;left:538.40px;">Eind datum ...</div><div class="t" style="top:1003.75px;font-size:12.7px;font-weight:bold;color:#343c50;letter-spacing:-0.176px;left:638.70px;">ContractType</div><div class="t" style="top:1003.75px;font-size:12.7px;font-weight:bold;color:#343c50;letter-spacing:-0.629px;left:738.90px;">FTE</div><div class="t" style="top:1003.75px;font-size:12.7px;font-weight:bold;color:#343c50;letter-spacing:0.400px;left:838.60px;">Uren/wk</div><div class="t" style="top:1003.75px;font-size:12.7px;font-weight:bold;color:#343c50;letter-spacing:-0.085px;left:938.90px;">Leeftijdsgr...</div><svg style="left:111.9px;top:1003.2px" width="10.2" height="5" viewBox="0 0 10.2 5"><path d="M0 5 L10.2 5 L5.1 0 Z" fill="#3b392f"/></svg><div class="t" style="top:1035.85px;font-size:12.7px;color:#3a4156;letter-spacing:-0.075px;left:46.50px;">Bartje Boef</div><div class="t" style="top:1035.85px;font-size:12.7px;color:#3a4156;letter-spacing:-0.118px;left:138.90px;">Winkel</div><div class="t" style="top:1035.85px;font-size:12.7px;color:#3a4156;letter-spacing:0.464px;left:339.00px;">01-04-2000</div><div class="t" style="top:1035.85px;font-size:12.7px;color:#3a4156;letter-spacing:0.514px;left:438.70px;">01-02-2015</div><div class="t" style="top:1035.85px;font-size:12.7px;color:#3a4156;letter-spacing:-0.093px;left:638.70px;">Onbepaald</div><div class="t" style="top:1035.85px;font-size:12.7px;color:#3a4156;letter-spacing:0.196px;left:738.90px;">0,70</div><div class="t" style="top:1035.85px;font-size:12.7px;color:#3a4156;letter-spacing:0.138px;left:838.60px;">28</div><div class="t" style="top:1035.85px;font-size:12.7px;color:#3a4156;letter-spacing:0.444px;left:938.90px;">25-35</div><div class="t" style="top:1067.85px;font-size:12.7px;color:#3a4156;letter-spacing:-0.185px;left:46.50px;">Denise Dor...</div><div class="t" style="top:1067.85px;font-size:12.7px;color:#3a4156;letter-spacing:-0.118px;left:138.90px;">Winkel</div><div class="t" style="top:1067.85px;font-size:12.7px;color:#3a4156;letter-spacing:0.464px;left:339.00px;">01-07-1992</div><div class="t" style="top:1067.85px;font-size:12.7px;color:#3a4156;letter-spacing:0.514px;left:438.70px;">01-03-2014</div><div class="t" style="top:1067.85px;font-size:12.7px;color:#3a4156;letter-spacing:-0.093px;left:638.70px;">Onbepaald</div><div class="t" style="top:1067.85px;font-size:12.7px;color:#3a4156;letter-spacing:0.196px;left:738.90px;">0,50</div><div class="t" style="top:1067.85px;font-size:12.7px;color:#3a4156;letter-spacing:0.138px;left:838.60px;">20</div><div class="t" style="top:1067.85px;font-size:12.7px;color:#3a4156;letter-spacing:0.444px;left:938.90px;">25-35</div>
</div></div>
<div class="abs" style="left:1870px;top:458px;width:31px;height:102px;background:#fff;border:1px solid #d0d0d0;border-radius:4px 0 0 4px;box-shadow:0 1px 5px rgba(0,0,0,0.35)"></div>
<div class="abs" style="left:1896.5px;top:459px;width:2px;height:100px;background:#2b6b7d"></div>
<svg style="left:1877px;top:464px" width="9" height="12" viewBox="0 0 9 12"><path d="M7.5 1.2 L2.2 6 L7.5 10.8" fill="none" stroke="#a3a3a3" stroke-width="2.3"/></svg>
<div class="t" style="left:1883.4px;top:514.2px;font-size:10.3px;color:#333;letter-spacing:-0.05px;transform:translate(-50%,-50%) rotate(-90deg)">Hulp nodig?</div>
<div class="abs" style="left:1881px;top:545px;width:1px;height:1px;background:#d9d9d9"></div><div class="abs" style="left:1883px;top:545px;width:1px;height:1px;background:#d9d9d9"></div><div class="abs" style="left:1885px;top:545px;width:1px;height:1px;background:#d9d9d9"></div>
</body></html>
